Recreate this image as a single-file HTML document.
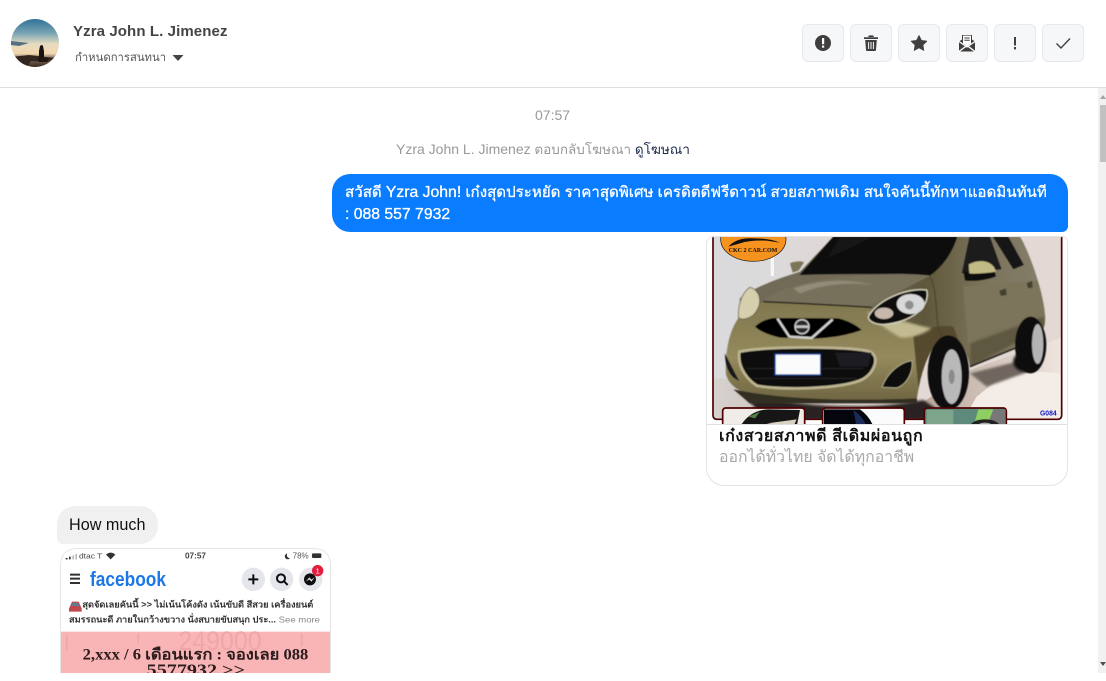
<!DOCTYPE html>
<html lang="th">
<head>
<meta charset="utf-8">
<title>Conversation</title>
<style>
html,body{margin:0;padding:0;background:#fff;}
body{width:1106px;height:681px;overflow:hidden;position:relative;font-family:"Liberation Sans","Noto Sans CJK SC",sans-serif;color:#444;}
.a{position:absolute;white-space:nowrap;}
.btn{position:absolute;top:24px;width:40px;height:36px;background:#f6f7f9;border:1px solid #e6e8ec;border-radius:6px;}
.btn svg{position:absolute;left:0;top:0;width:40px;height:36px;}
.l{font-size:15.75px;}
</style>
</head>
<body>
<!-- avatar -->
<svg class="a" style="left:11px;top:19px" width="48" height="48" viewBox="0 0 48 48">
<defs>
<linearGradient id="sky" x1="0" y1="0" x2="0" y2="1"><stop offset="0" stop-color="#2f7298"/><stop offset=".3" stop-color="#7aa5b4"/><stop offset=".52" stop-color="#e6dcc0"/><stop offset=".72" stop-color="#f3d8ae"/><stop offset=".8" stop-color="#8c7868"/><stop offset="1" stop-color="#3a2a22"/></linearGradient>
<clipPath id="ac"><circle cx="24" cy="24" r="24"/></clipPath>
</defs>
<g clip-path="url(#ac)">
<rect width="48" height="48" fill="url(#sky)"/>
<path d="M0 22 L18 24 L8 27 L0 26Z" fill="#56707f"/>
<path d="M0 38 L18 36 L44 39 L36 43 L20 42 L16 48 L0 48Z" fill="#33261f"/>
<path d="M29 27 q2-2 3 0 l1 5 l0 7 l-5 0 l0-7Z" fill="#17120f"/>
<path d="M26 39 L38 39 L36 43 L28 43Z" fill="#211813"/>
</g>
</svg>
<div class="a" style="left:73px;top:23px;font-size:15px;font-weight:bold;line-height:18px;color:#444;letter-spacing:.1px">Yzra John L. Jimenez</div>
<div class="a" style="left:75px;top:51px;font-size:11.3px;line-height:15px;color:#555">กำหนดการสนทนา</div>
<svg class="a" style="left:172px;top:54px" width="12" height="8"><path d="M0.5 1 H11.5 L6 7Z" fill="#444"/></svg>

<!-- buttons -->
<div class="btn" style="left:802px"><svg viewBox="0 0 40 36"><circle cx="20" cy="18" r="8" fill="#3f3f3f"/><rect x="19" y="13" width="2.2" height="6.2" fill="#fff"/><rect x="19" y="20.5" width="2.2" height="2.2" fill="#fff"/></svg></div>
<div class="btn" style="left:850px"><svg viewBox="0 0 40 36"><path d="M13 12.2 H27 V14 H13Z M17 12 L18 10.4 H22 L23 12Z" fill="#3f3f3f"/><path d="M14.2 15 H25.8 L25 25 Q24.9 26 24 26 H16 Q15.1 26 15 25Z" fill="#3f3f3f"/><path d="M17.6 17 V24 M20 17 V24 M22.4 17 V24" stroke="#f6f7f9" stroke-width="1"/></svg></div>
<div class="btn" style="left:898px"><svg viewBox="0 0 40 36"><path d="M20 10.5 L22.4 15.4 L27.8 16.2 L23.9 20 L24.8 25.4 L20 22.8 L15.2 25.4 L16.1 20 L12.2 16.2 L17.6 15.4Z" fill="#3f3f3f" stroke="#3f3f3f" stroke-width=".8" stroke-linejoin="round"/></svg></div>
<div class="btn" style="left:946px"><svg viewBox="0 0 40 36"><path d="M12 16.5 L15 14.5 V10 H25 V14.5 L28 16.5 V26.5 H12Z" fill="#3f3f3f"/><path d="M16 10.6 H24 V18.5 L20 21 L16 18.5Z" fill="#fff"/><path d="M17.3 13 H22.7 M17.3 15.3 H22.7" stroke="#3f3f3f" stroke-width="1"/><path d="M12 26.5 L20 20.5 L28 26.5" fill="none" stroke="#fff" stroke-width="1.4"/><path d="M12 16.5 L20 22 L28 16.5" fill="none" stroke="#fff" stroke-width="1.2"/></svg></div>
<div class="btn" style="left:994px"><svg viewBox="0 0 40 36"><rect x="19" y="12" width="2" height="8.5" fill="#3f3f3f"/><rect x="19" y="22" width="2" height="2.4" fill="#3f3f3f"/></svg></div>
<div class="btn" style="left:1042px"><svg viewBox="0 0 40 36"><path d="M13.5 18.5 L18 23 L27 13.5" fill="none" stroke="#3f3f3f" stroke-width="1.4"/></svg></div>

<div class="a" style="left:0;top:87px;width:1106px;height:1px;background:#dedede"></div>

<!-- scrollbar -->
<div class="a" style="left:1098px;top:88px;width:8px;height:585px;background:#f1f1f1"></div>
<div class="a" style="left:1100px;top:105px;width:6px;height:57px;background:#c1c1c1"></div>
<svg class="a" style="left:1100px;top:94px" width="6" height="6"><path d="M3 1 L6 5 H0Z" fill="#a3a3a3"/></svg>
<svg class="a" style="left:1100px;top:661px" width="6" height="6"><path d="M0 1 H6 L3 5Z" fill="#505050"/></svg>

<!-- center text -->
<div class="a" style="left:535px;top:107px;font-size:14px;line-height:16px;color:#999">07:57</div>
<div class="a" style="left:396px;top:141px;font-size:13.5px;line-height:16px;color:#999"><span style="font-size:14px">Yzra John L. Jimenez</span> ตอบกลับโฆษณา <span style="color:#1c2b4a">ดูโฆษณา</span></div>

<!-- blue bubble -->
<div class="a" style="left:332px;top:174px;width:736px;height:58px;background:#0a7cff;border-radius:18px 18px 6px 18px"></div>
<div class="a" style="left:345px;top:182px;font-size:15.1px;line-height:22px;color:#fff;-webkit-text-stroke:.3px #fff">สวัสดี <span class="l">Yzra John!</span> เก๋งสุดประหยัด ราคาสุดพิเศษ เครดิตดีฟรีดาวน์ สวยสภาพเดิม สนใจคันนี้ทักหาแอดมินทันที<br><span class="l">: 088 557 7932</span></div>

<!-- card -->
<div class="a" style="left:706px;top:236px;width:360px;height:248px;border:1px solid #e4e4e4;border-radius:8px 6px 18px 18px;background:#fff"></div>
<svg class="a" style="left:0;top:0" width="1106" height="681" viewBox="0 0 1106 681">
<defs>
<clipPath id="cimg"><path d="M707 245 Q707 237 715 237 H1062 Q1067 237 1067 242 V424 H707Z"/></clipPath>
<clipPath id="cframe"><rect x="40" y="20" width="1044" height="547" rx="10"/></clipPath>
<linearGradient id="floor" x1="0" y1="0" x2="1" y2="0"><stop offset="0" stop-color="#d6d2ce"/><stop offset=".6" stop-color="#b8a59a"/><stop offset="1" stop-color="#efe6df"/></linearGradient>
<linearGradient id="bodyg" x1="0" y1="0" x2="1" y2="0"><stop offset="0" stop-color="#6f6a56"/><stop offset=".4" stop-color="#736c58"/><stop offset=".62" stop-color="#5f573b"/><stop offset=".8" stop-color="#7b735b"/><stop offset="1" stop-color="#857e6a"/></linearGradient>
<linearGradient id="nose" x1="0" y1="0" x2="0" y2="1"><stop offset="0" stop-color="#80774f"/><stop offset=".55" stop-color="#948a5d"/><stop offset="1" stop-color="#6d6340"/></linearGradient>
<linearGradient id="wall" x1="0" y1="0" x2="1" y2="0"><stop offset="0" stop-color="#d9dadd"/><stop offset=".5" stop-color="#e2d8d4"/><stop offset="1" stop-color="#e3d8d4"/></linearGradient>
<filter id="soft"><feGaussianBlur stdDeviation="4"/></filter>
<filter id="car"><feGaussianBlur stdDeviation="1.3"/></filter>
<filter id="soft2"><feGaussianBlur stdDeviation=".25"/></filter>
<clipPath id="cbody"><path d="M120 205 C170 165 270 135 300 125 L400 20 H960 C985 60 1030 180 1036 262 C1034 330 990 350 960 345 L810 412 C800 350 770 310 730 320 C690 345 660 430 650 510 L230 510 C160 505 90 482 78 432 C75 360 90 300 115 265Z"/></clipPath>
</defs>
<g clip-path="url(#cimg)">
<g transform="translate(700 230) scale(.33333)">
<rect x="20" y="20" width="1090" height="570" fill="#fff"/>
<g clip-path="url(#cframe)">
<rect x="38" y="18" width="1050" height="552" fill="url(#wall)"/>
<rect x="212" y="18" width="10" height="120" fill="#f7f7f7"/>
<path d="M38 445 L90 445 L230 520 L650 530 L810 420 L1090 320 V570 H38Z" fill="url(#floor)"/>
<path d="M830 500 L930 420 L1090 430 V570 H790Z" fill="#f4ece6"/>
<path d="M120 485 Q400 560 670 510 L760 570 H200Z" fill="#2b2320" filter="url(#soft)"/>
<path d="M810 430 L950 395 L1000 420 L860 470Z" fill="#6f665e" filter="url(#soft)"/>
<ellipse cx="975" cy="395" rx="35" ry="30" fill="#111" filter="url(#soft)"/>
<g filter="url(#car)">
<!-- body -->
<path d="M120 205 C170 165 270 135 300 125 L400 20 H960 C985 60 1030 180 1036 262 C1034 330 990 350 960 345 L810 412 C800 350 770 310 730 320 C690 345 660 430 650 510 L230 510 C160 505 90 482 78 432 C75 360 90 300 115 265Z" fill="url(#bodyg)"/>
<g clip-path="url(#cbody)">
<path d="M70 260 L190 215 L505 232 L690 300 L730 330 L660 520 L70 520Z" fill="url(#nose)"/>
<path d="M640 320 Q690 280 760 290 L810 420 L660 520Z" fill="#544a2e"/>
<path d="M500 245 Q600 275 695 295 Q650 325 600 322 Q535 285 500 245Z" fill="#c2bb92" filter="url(#soft)"/>
<path d="M790 170 L1030 150 L1036 300 L810 412Z" fill="#7c745c"/>
<path d="M810 340 L1030 260 L1036 290 L810 412Z" fill="#5e5841" filter="url(#soft)"/>
</g>
<!-- windshield -->
<path d="M298 135 L400 20 H772 C760 60 735 105 690 137 C560 130 400 132 298 135Z" fill="#08080a"/>
<path d="M420 20 H520 L450 55 L380 85Z" fill="#131316"/>
<!-- side windows -->
<path d="M785 130 L808 20 H870 L905 118Z" fill="#1a1b1d"/>
<path d="M878 20 H925 L972 105 L940 118Z" fill="#131416"/>
<!-- hood -->
<path d="M190 215 C250 145 560 120 690 137 L505 232Z" fill="#77715c"/>
<path d="M280 175 Q400 135 520 165 Q400 150 300 190Z" fill="#938d78" filter="url(#car)"/>
<path d="M190 215 Q350 222 515 232" fill="none" stroke="#1a1814" stroke-width="4"/>
<path d="M690 140 C720 200 700 300 730 320" fill="none" stroke="#443f2d" stroke-width="3"/>
<!-- mirrors -->
<path d="M270 100 C285 93 305 93 312 97 L296 122 L278 128Z" fill="#7d7459"/>
<path d="M795 152 L790 125 L885 125 L888 140 Q840 157 795 152Z" fill="#111"/>
<path d="M806 103 C840 85 880 92 888 125 C860 130 830 132 808 130Z" fill="#c2ba84"/>
<!-- handles -->
<path d="M898 182 L918 175 L920 195 L902 198Z" fill="#443f2f"/>
<path d="M980 160 L996 152 L998 172 L984 175Z" fill="#443f2f"/>
<path d="M810 410 L985 338" stroke="#24221a" stroke-width="5"/>
<!-- left headlight -->
<path d="M150 172 C180 180 192 220 160 255 C140 270 115 272 115 257 C115 215 130 185 150 172Z" fill="#d6cfae" stroke="#4f4936" stroke-width="2"/>
<!-- right headlight -->
<path d="M505 260 C530 210 620 172 680 180 C692 220 650 272 560 283 C530 286 505 276 505 260Z" fill="#111" stroke="#d5d2bc" stroke-width="4"/>
<ellipse cx="632" cy="222" rx="42" ry="30" fill="#d8d8d8"/>
<ellipse cx="552" cy="250" rx="28" ry="17" fill="#c8b8ac"/>
<circle cx="628" cy="225" r="13" fill="#8f8f8f"/>
<!-- upper grille -->
<path d="M165 290 C190 265 225 262 240 264 L415 265 C440 270 470 285 485 300 C440 316 400 323 340 326 L240 323 C210 316 180 305 165 290Z" fill="#060606"/>
<path d="M232 265 L268 320 L335 324 L398 268" fill="none" stroke="#d3d3cf" stroke-width="7"/>
<circle cx="306" cy="290" r="21" fill="#2a2a2a" stroke="#d2d2d0" stroke-width="4"/>
<rect x="284" y="286" width="44" height="8" fill="#c4c4c4"/>
<!-- lower bumper -->
<path d="M118 365 C200 348 450 348 510 365 C540 380 525 425 490 447 C430 477 250 482 170 467 C130 440 113 400 118 365Z" fill="#0a0a0a" stroke="#bdb592" stroke-width="8"/>
<path d="M405 368 H515 L505 410 H420Z" fill="#1d1d21"/>
<path d="M140 415 H490 M160 445 H470" stroke="#262626" stroke-width="3"/>
<rect x="225" y="372" width="137" height="63" fill="#fbfbfb" stroke="#16408f" stroke-width="4"/>
<path d="M75 370 C90 400 110 440 118 452 C95 445 75 420 75 370Z" fill="#15151a"/>
<path d="M546 472 C560 430 600 396 636 392 C640 420 625 462 590 474Z" fill="#0c0c10" stroke="#c9c2a0" stroke-width="2"/>
<path d="M100 478 Q300 520 650 505 L652 520 H150Z" fill="#332e20"/>
<!-- wheels -->
<ellipse cx="745" cy="428" rx="62" ry="112" fill="#0a0a0a"/>
<ellipse cx="755" cy="440" rx="30" ry="82" fill="#b9b9b9"/>
<ellipse cx="755" cy="440" rx="9" ry="22" fill="#8b8b8b"/>
<ellipse cx="992" cy="345" rx="47" ry="85" fill="#0c0c0c"/>
<ellipse cx="1013" cy="342" rx="17" ry="60" fill="#b4b4b4"/>
</g>
</g>
<!-- frame -->
<rect x="39" y="10" width="1046" height="558" rx="11" fill="none" stroke="#4e0000" stroke-width="5"/>
<!-- logo -->
<ellipse cx="160" cy="28" rx="98" ry="66" fill="#f6921e" stroke="#111" stroke-width="2"/>
<path d="M85 50 Q110 22 160 25 Q210 25 240 38 L200 32 Q150 30 120 40Z" fill="#111"/>
<text x="86" y="66" font-family="Liberation Serif,serif" font-size="18" font-weight="bold" fill="#111" textLength="146" lengthAdjust="spacingAndGlyphs">CKC 2 CAR.COM</text>
<text x="1020" y="556" font-family="Liberation Sans,sans-serif" font-size="21" font-weight="bold" fill="#0a16c8" textLength="50" lengthAdjust="spacingAndGlyphs">G084</text>
<!-- thumbnails -->
<g stroke="#4e0000" stroke-width="5">
<rect x="68" y="534" width="246" height="70" rx="9" fill="#f0ece8"/>
<rect x="368" y="534" width="245" height="70" rx="9" fill="#fbfbfb"/>
<rect x="673" y="534" width="246" height="70" rx="9" fill="#5d8a7a"/>
</g>
<path d="M120 590 Q150 540 205 538 L300 540 L290 590Z" fill="#161616"/>
<path d="M145 560 L180 545 L165 565Z" fill="#4f7d45"/>
<path d="M200 580 L290 568 L280 590Z" fill="#d8d0c0"/>
<path d="M372 538 H480 Q510 560 520 590 H372Z" fill="#05060d"/>
<path d="M460 540 Q490 560 500 590 H470Z" fill="#1b2a58"/>
<path d="M835 538 H880 L870 590 H820Z" fill="#8fcf62"/>
<path d="M880 538 H917 V590 H860Z" fill="#777"/>
<ellipse cx="855" cy="590" rx="45" ry="22" fill="#222"/>
<ellipse cx="855" cy="590" rx="25" ry="12" fill="#aaa"/>
<path d="M680 540 H760 V590 H680Z" fill="#7da58b"/>
</g>
</g>
<rect x="707" y="424" width="360" height="1" fill="#e0e0e0"/>
</svg>
<div class="a" style="left:719px;top:428px;font-size:16px;line-height:18px;font-weight:bold;color:#111;letter-spacing:.62px">เก๋งสวยสภาพดี สีเดิมผ่อนถูก</div>
<div class="a" style="left:719px;top:449px;font-size:15.8px;line-height:18px;color:#a8a8a8">ออกได้ทั่วไทย จัดได้ทุกอาชีพ</div>

<!-- How much -->
<div class="a" style="left:57px;top:506px;width:101px;height:38px;background:#f0f0f0;border-radius:18px 18px 18px 6px"></div>
<div class="a" style="left:69px;top:516px;font-size:16.2px;line-height:18px;color:#111">How much</div>

<!-- screenshot -->
<svg class="a" style="left:0;top:0" width="1106" height="681" viewBox="0 0 1106 681">
<defs>
<clipPath id="cshot"><path d="M61 673 V566 Q61 549 78 549 H313 Q330 549 330 566 V673Z"/></clipPath>
</defs>
<path d="M60.5 673 V566 Q60.5 548.5 78 548.5 H313 Q330.5 548.5 330.5 566 V673" fill="none" stroke="#e4e4e4"/>
<g clip-path="url(#cshot)">
<g transform="translate(50 500) scale(.33333)" filter="url(#soft2)">
<rect x="30" y="145" width="815" height="380" fill="#fff"/>
<path d="M47 178 V174 H53 V178Z M57 178 V170 H62 V178Z" fill="#333"/>
<path d="M67 178 V166 H72 V178Z M76 178 V162 H81 V178Z" fill="#bbb"/>
<text x="87" y="176" font-size="23" fill="#444" font-family="Liberation Sans,sans-serif" textLength="70" lengthAdjust="spacingAndGlyphs">dtac T</text>
<path d="M168 164 Q182 152 196 164 L182 178Z" fill="#333"/>
<text x="405" y="176" font-size="24" font-weight="bold" fill="#444" font-family="Liberation Sans,sans-serif" textLength="63" lengthAdjust="spacingAndGlyphs">07:57</text>
<path d="M712 160 A9 9 0 1 0 720 175 A10 10 0 0 1 712 160Z" fill="#333"/>
<text x="728" y="176" font-size="24" fill="#555" font-family="Liberation Sans,sans-serif" textLength="48" lengthAdjust="spacingAndGlyphs">78%</text>
<rect x="786" y="160" width="28" height="14" rx="3" fill="#333"/>
<path d="M60 224 H90 M60 236 H90 M60 249 H90" stroke="#333" stroke-width="6"/>
<text x="120" y="258" font-size="62" font-weight="bold" fill="#1a77e8" font-family="Liberation Sans,sans-serif" textLength="228" lengthAdjust="spacingAndGlyphs">facebook</text>
<circle cx="610" cy="238" r="35" fill="#e4e6eb"/>
<circle cx="695" cy="238" r="35" fill="#e4e6eb"/>
<circle cx="782" cy="238" r="35" fill="#e4e6eb"/>
<path d="M595 238 H625 M610 223 V253" stroke="#111" stroke-width="6"/>
<circle cx="693" cy="235" r="12" fill="none" stroke="#111" stroke-width="6"/>
<path d="M702 244 L713 255" stroke="#111" stroke-width="6"/>
<circle cx="780" cy="238" r="18" fill="#111"/>
<path d="M768 244 L778 232 L784 239 L794 232 L784 245 L778 238Z" fill="#e4e6eb"/>
<circle cx="803" cy="212" r="17" fill="#e41e3f"/>
<text x="803" y="220" font-size="22" fill="#fff" text-anchor="middle" font-family="Liberation Sans,sans-serif">1</text>
<path d="M57 326 L66 305 H86 L95 326 V335 H57Z" fill="#c0474e"/>
<path d="M68 308 H84 L88 318 H64Z" fill="#5d7e92"/>
<text x="97" y="323" font-size="27" fill="#333" font-weight="bold" font-family="Liberation Sans,sans-serif" textLength="693" lengthAdjust="spacingAndGlyphs">สุดจัดเลยคันนี้ &gt;&gt; ไม่เน้นโค้งดัง เน้นขับดี สีสวย เครื่องยนต์</text>
<text x="57" y="367" font-size="27" fill="#333" font-weight="bold" font-family="Liberation Sans,sans-serif" textLength="621" lengthAdjust="spacingAndGlyphs">สมรรถนะดี ภายในกว้างขวาง นั่งสบายขับสนุก ประ...</text>
<text x="686" y="367" font-size="26" fill="#888" font-family="Liberation Sans,sans-serif" textLength="124" lengthAdjust="spacingAndGlyphs">See more</text>
<rect x="30" y="395" width="815" height="130" fill="#f9b4b6"/>
<text x="385" y="450" font-size="80" fill="#efa6a8" font-family="Liberation Sans,sans-serif" textLength="250" lengthAdjust="spacingAndGlyphs">249000</text>
<path d="M50 405 V450 M265 400 V430 M755 400 V440" stroke="#efa6a8" stroke-width="5"/>
<text x="98" y="478" font-size="46" font-weight="bold" fill="#2b1c1c" font-family="Liberation Serif,serif" textLength="677" lengthAdjust="spacingAndGlyphs">2,xxx / 6 เดือนแรก : จองเลย 088</text>
<text x="290" y="526" font-size="50" font-weight="bold" fill="#2b1c1c" font-family="Liberation Serif,serif" textLength="295" lengthAdjust="spacingAndGlyphs">5577932 &gt;&gt;</text>
</g>
</g>
</svg>
<div class="a" style="left:0;top:673px;width:1106px;height:8px;background:#fff"></div>
</body>
</html>
